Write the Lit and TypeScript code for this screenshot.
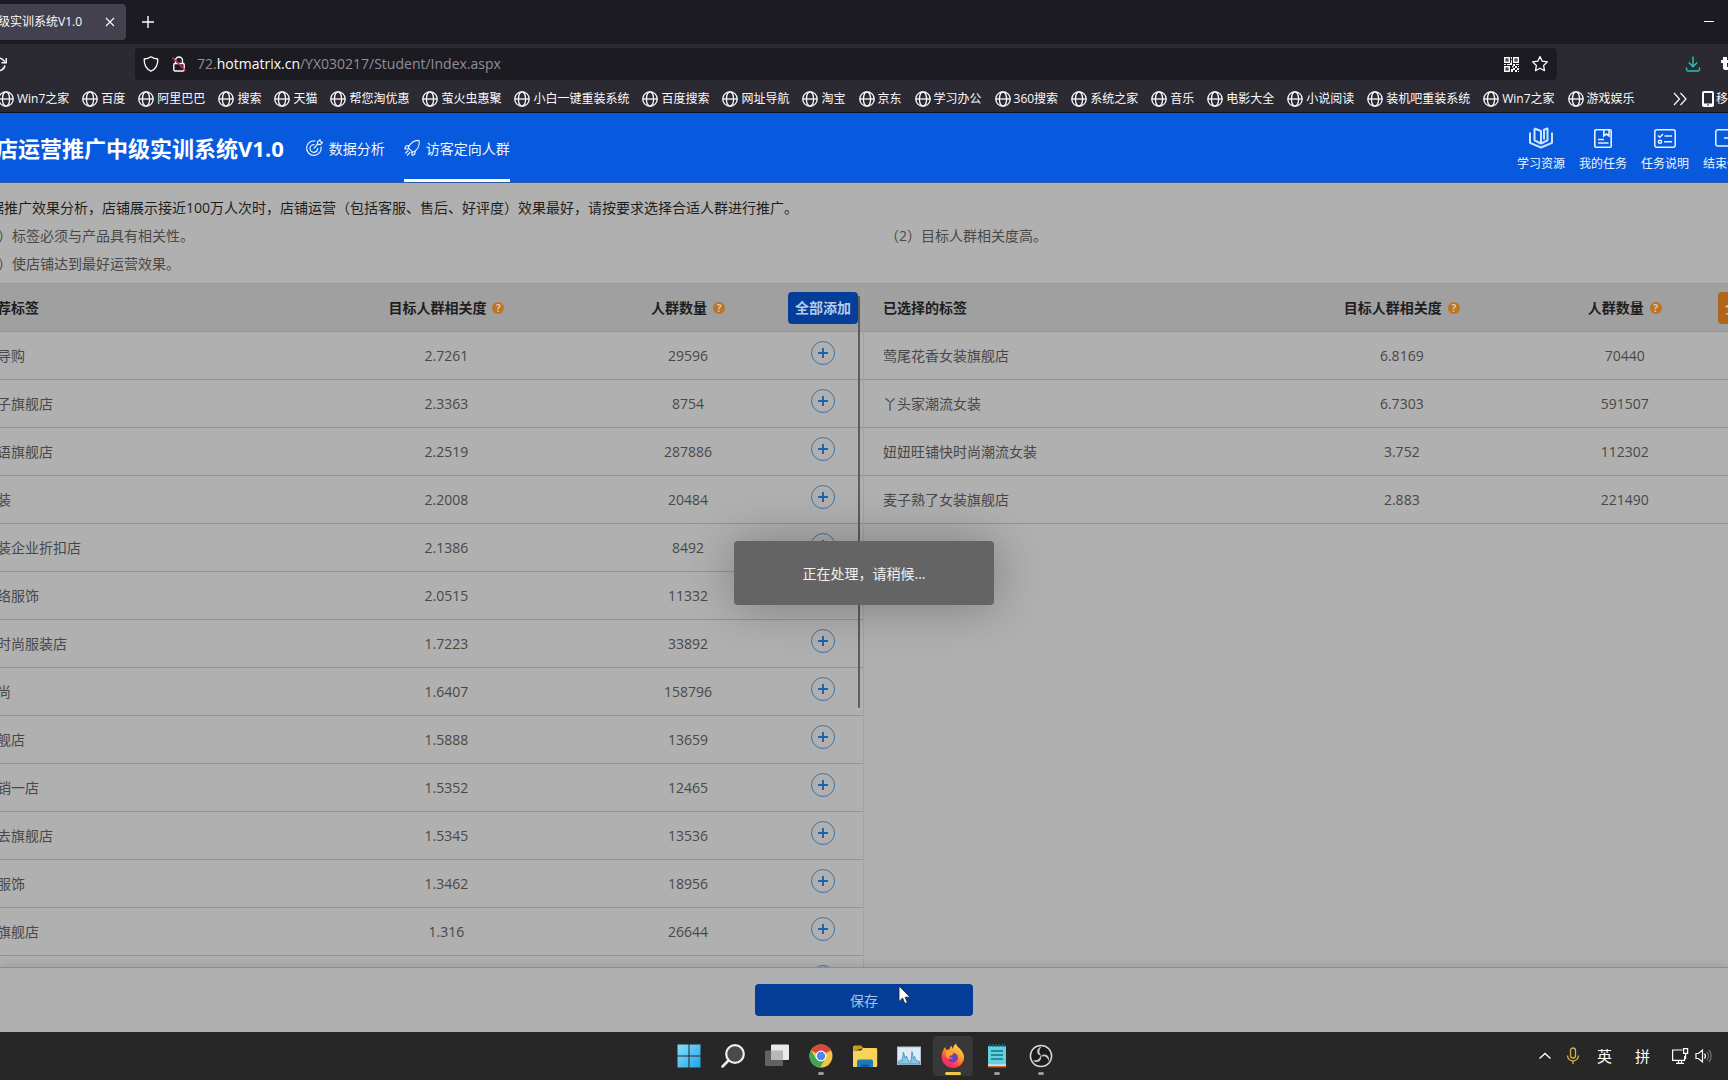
import { LitElement, html, css, svg, nothing } from "lit";
import { customElement, property } from "lit/decorators.js";

type Row = { name: string; score: string; count: string };

const BOOKMARKS = [
  "Win7之家", "百度", "阿里巴巴", "搜索", "天猫", "帮您淘优惠", "萤火虫惠聚",
  "小白一键重装系统", "百度搜索", "网址导航", "淘宝", "京东", "学习办公", "360搜索",
  "系统之家", "音乐", "电影大全", "小说阅读", "装机吧重装系统", "Win7之家", "游戏娱乐",
];

const RECOMMENDED: Row[] = [
  { name: "导购", score: "2.7261", count: "29596" },
  { name: "子旗舰店", score: "2.3363", count: "8754" },
  { name: "语旗舰店", score: "2.2519", count: "287886" },
  { name: "装", score: "2.2008", count: "20484" },
  { name: "装企业折扣店", score: "2.1386", count: "8492" },
  { name: "络服饰", score: "2.0515", count: "11332" },
  { name: "时尚服装店", score: "1.7223", count: "33892" },
  { name: "尚", score: "1.6407", count: "158796" },
  { name: "舰店", score: "1.5888", count: "13659" },
  { name: "销一店", score: "1.5352", count: "12465" },
  { name: "去旗舰店", score: "1.5345", count: "13536" },
  { name: "服饰", score: "1.3462", count: "18956" },
  { name: "旗舰店", score: "1.316", count: "26644" },
  { name: "", score: "", count: "" },
];

const SELECTED: Row[] = [
  { name: "莺尾花香女装旗舰店", score: "6.8169", count: "70440" },
  { name: "丫头家潮流女装", score: "6.7303", count: "591507" },
  { name: "妞妞旺铺快时尚潮流女装", score: "3.752", count: "112302" },
  { name: "麦子熟了女装旗舰店", score: "2.883", count: "221490" },
];

const base = css`
  * { box-sizing: border-box; }
  :host {
    font-family: "Open Sans", "Noto Sans CJK SC", sans-serif;
  }
  svg { display: block; flex: none; }
  button {
    font: inherit; color: inherit; border: 0; background: none; padding: 0; margin: 0;
    display: flex; align-items: center; justify-content: center; flex: none;
  }
  a { color: inherit; text-decoration: none; }
`;

const globe = svg`<g fill="none" stroke="#fbfbfe" stroke-width="1.3"><circle cx="8" cy="8" r="7.2"/><ellipse cx="8" cy="8" rx="3.6" ry="7.2"/><path d="M.8 8h14.4"/></g>`;

@customElement("browser-chrome")
export class BrowserChrome extends LitElement {
  static styles = [base, css`
    :host { display: block; color: #fbfbfe; font-size: 12px; background: #2b2a33; flex: none; }
    .tabs { height: 44px; background: #1c1b22; display: flex; align-items: center; }
    .tab {
      height: 36px; padding: 0 8px 0 0; background: #42414d; border-radius: 0 4px 4px 0;
      display: flex; align-items: center; gap: 20px; margin-right: 14px;
    }
    .tab-title { margin-left: -2px; line-height: 18px; white-space: nowrap; }
    .minimize { margin-left: auto; margin-right: 13px; }
    .nav { height: 40px; display: flex; align-items: center; }
    .reload { margin-left: -9px; margin-right: 128px; width: 16px; }
    .url {
      flex: 1; height: 32px; margin-right: 128px; background: #1c1b22; border-radius: 4px;
      display: flex; align-items: center; gap: 12px; padding: 0 8px;
    }
    .address { flex: 1; margin-left: -2px; font-size: 14px; line-height: 20px; color: #8f8f9a; white-space: nowrap; }
    .address b { color: #fbfbfe; font-weight: 400; }
    .ext { margin-left: 20px; margin-right: -9px; }
    .marks { height: 29px; padding-top: 2px; display: flex; align-items: center; border-bottom: 1px solid #0c1226; overflow: hidden; }
    .mark { display: flex; align-items: center; gap: 3px; margin-right: 13px; line-height: 18px; white-space: nowrap; flex: none; }
    .list { display: flex; margin-left: -2px; flex: 1; min-width: 0; overflow: hidden; }
    .more { margin-right: 14px; }
    .mobile { display: flex; align-items: center; gap: 2px; width: 26px; overflow: hidden; line-height: 18px; }
  `];

  render() {
    return html`
      <div class="tabs">
        <div class="tab">
          <span class="tab-title">级实训系统V1.0</span>
          <button aria-label="关闭标签页"><svg width="16" height="16" viewBox="0 0 16 16"><path d="M4 4l8 8M12 4l-8 8" stroke="#fbfbfe" stroke-width="1.1"/></svg></button>
        </div>
        <button aria-label="新标签页"><svg width="16" height="16" viewBox="0 0 16 16"><path d="M8 2v12M2 8h12" stroke="#fbfbfe" stroke-width="1.4"/></svg></button>
        <button class="minimize" aria-label="最小化"><svg width="12" height="12" viewBox="0 0 12 12"><path d="M1 5.500h10" stroke="#fff"/></svg></button>
      </div>
      <div class="nav">
        <button class="reload" aria-label="刷新"><svg width="16" height="16" viewBox="0 0 16 16"><path d="M14 9.500A6.200 6.200 0 1 1 12.500 4.200L15 6.500M15.300 2v4.800h-4.800" fill="none" stroke="#fbfbfe" stroke-width="1.5"/></svg></button>
        <div class="url">
          <svg width="16" height="16" viewBox="0 0 16 16"><path d="M8 .8C10 2.200 12.500 3 14.800 3c.2 5.500-1.800 10-6.800 12.200C3 13 1 8.500 1.200 3 3.500 3 6 2.200 8 .8z" fill="none" stroke="#fbfbfe" stroke-width="1.300" stroke-linejoin="round"/></svg>
          <svg width="16" height="16" viewBox="0 0 16 16"><path d="M4.500 7.500V4.500a3.500 3.500 0 0 1 7 0v3" fill="none" stroke="#fbfbfe" stroke-width="1.400"/><rect x="2.800" y="7.500" width="10.400" height="7.500" rx="1.200" fill="none" stroke="#fbfbfe" stroke-width="1.400"/><path d="M1.500 1.500l13 13" stroke="#e22850" stroke-width="1.500"/></svg>
          <div class="address" role="textbox" aria-label="地址">72.<b>hotmatrix.cn</b>/YX030217/Student/Index.aspx</div>
          <button aria-label="二维码"><svg width="15" height="15" viewBox="0 0 15 15" fill="#fbfbfe"><path fill-rule="evenodd" d="M0 0h6v6H0zM1.500 1.500v3h3v-3zM9 0h6v6H9zM10.500 1.500v3h3v-3zM0 9h6v6H0zM1.500 10.500v3h3v-3z"/><path d="M2.500 2.500h1v1h-1zM11.500 2.500h1v1h-1zM2.500 11.500h1v1h-1zM7 0h1v2H7zM7 3h1v3H7zM0 7h2v1H0zM3 7h3v1H3zM6 6h2v2H6zM9 7h2v2H9zM12 7h3v1h-3zM8 9h1.500v1.500H8zM11 9h2v2h-2zM13 11h2v2h-2zM9 11h2v2H9zM7 12h2v3H7zM11 13h2v2h-2zM14 14h1v1h-1zM14 9h1v1h-1z"/></svg></button>
          <button aria-label="收藏"><svg width="18" height="18" viewBox="0 0 18 18"><path d="M9 1.500l2.200 4.700 5.200.7-3.800 3.600.9 5.200L9 13.200l-4.500 2.500.9-5.200L1.600 6.900l5.200-.7z" fill="none" stroke="#fbfbfe" stroke-width="1.300" stroke-linejoin="round"/></svg></button>
        </div>
        <button aria-label="下载"><svg width="16" height="16" viewBox="0 0 16 16"><path d="M8 .5v10M3.800 6.500L8 10.700l4.200-4.200M1.500 11.500v1.800c0 1 .7 1.700 1.700 1.700h9.600c1 0 1.700-.7 1.700-1.700v-1.800" fill="none" stroke="#2ac3b2" stroke-width="1.400"/></svg></button>
        <button class="ext" aria-label="扩展"><svg width="16" height="16" viewBox="0 0 16 16"><path d="M2 1h4v3h4v3H6v4h4v3H4q-2 0-2-2V7H0V4h2z" fill="#fbfbfe"/></svg></button>
      </div>
      <nav class="marks">
        <div class="list">${BOOKMARKS.map((t) => html`<a class="mark" href="#"><svg width="16" height="16" viewBox="0 0 16 16">${globe}</svg>${t}</a>`)}</div>
        <button class="more" aria-label="更多书签"><svg width="16" height="16" viewBox="0 0 16 16"><path d="M2 2l5.500 6L2 14M8.500 2L14 8l-5.500 6" fill="none" stroke="#fbfbfe" stroke-width="1.200"/></svg></button>
        <a class="mobile" href="#"><svg width="12" height="16" viewBox="0 0 12 16"><path fill-rule="evenodd" d="M2 0h8a2 2 0 0 1 2 2v12a2 2 0 0 1-2 2H2a2 2 0 0 1-2-2V2a2 2 0 0 1 2-2zM2 2v10.500h8V2zM5 13.500v1h2v-1z" fill="#fbfbfe"/></svg>移</a>
      </nav>`;
  }
}

@customElement("site-header")
export class SiteHeader extends LitElement {
  static styles = [base, css`
    :host { display: block; flex: none; color: #eef5ff; }
    .bar { height: 70px; background: #075ade; border-bottom: 1px solid #2a5ba8; display: flex; align-items: stretch; overflow: hidden; }
    h1 { margin: 0 21px 0 -4px; font-size: 22px; line-height: 70px; font-weight: 700; color: #fff; white-space: nowrap; }
    nav { display: flex; gap: 19px; }
    .link { display: flex; align-items: center; gap: 6px; font-size: 14px; border-bottom: 3px solid transparent; padding-top: 3px; white-space: nowrap; }
    .current { border-color: #fff; }
    .actions { margin-left: auto; display: flex; gap: 14px; margin-right: -23px; }
    .action { flex-direction: column; gap: 5px; font-size: 12px; line-height: 18px; width: 48px; padding-top: 4px; white-space: nowrap; }
    .ending { align-items: flex-start; }
    .ending svg { margin-left: 12px; }
  `];

  render() {
    return html`
      <header class="bar">
        <h1>店运营推广中级实训系统V1.0</h1>
        <nav>
          <a class="link" href="#"><svg width="18" height="18" viewBox="0 0 18 18" fill="none" stroke="#e6f0ff" stroke-width="1.200"><path d="M10.500 2A7.300 7.300 0 1 0 16 7.500"/><path d="M9.500 5.600A3.900 3.900 0 1 0 12.700 9"/><path d="M8.700 9.600l4-4.600M12.500 5.200V2.800L15 .8l.5 2 2 .5-2 2.400z"/></svg>数据分析</a>
          <a class="link current" href="#"><svg width="16" height="18" viewBox="0 0 16 18" fill="none" stroke="#e6f0ff" stroke-width="1.200" stroke-linejoin="round"><path d="M15 1.500c.8 4.500-1 9.500-6.200 11.800L4.200 8.700C6.500 4 10.500 1.200 15 1.500zM5.500 6.300L2 7l-1.200 2.800 3.800.3M11.200 11.800l-.5 3.500-2.400 1.200-.6-3.600"/><path d="M4.500 11.500L1.200 14.300M6.300 13.200L3 16.500"/></svg>访客定向人群</a>
        </nav>
        <div class="actions">
          <button class="action"><svg width="24" height="24" viewBox="0 0 24 24" fill="none" stroke="#cfe4ff" stroke-width="2" stroke-linejoin="round"><path d="M1 6.500v10.300L12 21.500l11-4.700V6.500"/><path d="M5.500 2.500v11.800L12 17.500l6.500-3.200V2.500L15 3.800v9.700M12 17V5L5.500 2.500"/></svg>学习资源</button>
          <button class="action"><svg width="24" height="24" viewBox="0 0 24 24" fill="none" stroke="#e6f0ff" stroke-width="1.600"><rect x="3.800" y="3.800" width="16.400" height="17.400" rx="1"/><path d="M12.800 4v6l2.600-2 2.600 2V4M7 13.500h6M7 17h10.500"/></svg>我的任务</button>
          <button class="action"><svg width="24" height="24" viewBox="0 0 24 24" fill="none" stroke="#e6f0ff" stroke-width="1.500"><rect x="1.800" y="3.800" width="20.400" height="17.400" rx="2"/><path d="M5 9.500l1.800 1.700L10 8M11.500 10H19M11 15.800h8"/><circle cx="7" cy="15.800" r="1.600"/></svg>任务说明</button>
          <button class="action ending"><svg width="24" height="24" viewBox="0 0 24 24" fill="none" stroke="#e6f0ff" stroke-width="1.500"><path d="M20 8V5.800a2 2 0 0 0-2-2H2.800a2 2 0 0 0-2 2V18a2 2 0 0 0 2 2H18M9 12h12"/></svg>结束任</button>
        </div>
      </header>`;
  }
}

@customElement("tag-table")
export class TagTable extends LitElement {
  @property({ attribute: false }) rows: Row[] = [];
  @property() heading = "";
  @property() action = "";
  @property({ type: Boolean, reflect: true }) addable = false;

  static styles = [base, css`
    :host { display: block; color: #484848; font-size: 14px; overflow: hidden; border-top: 1px solid #999; }
    table { width: 100%; table-layout: fixed; border-collapse: separate; border-spacing: 0; }
    :host(:not([addable])) table { width: calc(100% + 65px); }
    th, td { height: 48px; padding: 0; border-bottom: 1px solid #949494; text-align: center; line-height: 20px; white-space: nowrap; font-weight: 400; }
    th { background: #a0a0a0; color: #1e1e1e; font-weight: 700; font-size: 14px; }
    th:first-child, td:first-child { text-align: left; padding-left: 19px; }
    :host([addable]) th:first-child, :host([addable]) td:first-child { padding-left: 0; text-indent: -3px; }
    .score { width: 29%; }
    .count { width: 19%; }
    :host([addable]) .score { width: 34%; }
    :host([addable]) .count { width: 22%; }
    .op { width: 80px; }
    .label { display: inline-flex; align-items: center; gap: 6px; }
    .help { width: 12px; height: 12px; border-radius: 50%; background: #bd7424; color: #dccbb2; font-size: 10px; line-height: 12px; text-align: center; font-weight: 700; }
    .all { width: 70px; height: 32px; border-radius: 4px; background: #b0651a; color: #cfc0ad; margin: 0 auto; justify-content: flex-start; padding-left: 7px; }
    :host([addable]) .all { background: #043e98; color: #b6cbe6; }
    .add { margin: -6px auto 0; width: 24px; height: 24px; }
  `];

  render() {
    return html`
      <table>
        <thead>
          <tr>
            <th scope="col">${this.heading}</th>
            <th scope="col" class="score"><span class="label">目标人群相关度<span class="help">?</span></span></th>
            <th scope="col" class="count"><span class="label">人群数量<span class="help">?</span></span></th>
            <th scope="col" class="op"><button class="all">${this.action}</button></th>
          </tr>
        </thead>
        <tbody>
          ${this.rows.map((r) => html`<tr>
            <td>${r.name}</td><td>${r.score}</td><td>${r.count}</td>
            <td>${this.addable ? html`<button class="add" aria-label="添加"><svg width="24" height="24" viewBox="0 0 24 24" fill="none"><circle cx="12" cy="12" r="11.500" stroke="#44729f"/><path d="M12 7v10M7 12h10" stroke="#1f64a6" stroke-width="2"/></svg></button>` : nothing}</td>
          </tr>`)}
        </tbody>
      </table>`;
  }
}

@customElement("task-bar")
export class TaskBar extends LitElement {
  static styles = [base, css`
    :host { display: block; flex: none; color: #fff; }
    .bar { height: 48px; background: #272727; display: grid; grid-template-columns: 1fr auto 1fr; align-items: center; }
    .apps { grid-column: 2; display: flex; gap: 4px; padding-left: 1px; }
    .app { width: 40px; height: 40px; border-radius: 4px; position: relative; }
    .active { background: #383838; }
    .run::after { content: ""; position: absolute; bottom: 1px; left: 17px; width: 6px; height: 3px; border-radius: 2px; background: #9a9a9a; }
    .active::after { left: 12px; width: 16px; background: #f2c744; }
    .tray { grid-column: 3; justify-self: end; display: flex; align-items: center; padding-right: 16px; font-size: 15px; line-height: 20px; }
    .up { margin-right: 14px; }
    .mic { margin-right: 17px; }
    .ime { margin-right: 23px; }
    .py { margin-right: 21px; }
    .net { margin-right: 6px; }
  `];

  private icon(name: string, art: unknown, cls = "") {
    return html`<button class="app ${cls}" aria-label=${name}><svg width="26" height="26" viewBox="0 0 26 26">${art}</svg></button>`;
  }

  render() {
    const blade = "M13.500 3.500c-4.300 1.300-5.700 5.600-2.800 8.300 1 .9 2.200 1 3 .5-2.700-1.500-3.200-5-.2-8.800z";
    return html`
      <footer class="bar">
        <div class="apps">
          ${this.icon("开始", svg`<defs><linearGradient id="w" x1="0" y1="0" x2="26" y2="26" gradientUnits="userSpaceOnUse"><stop stop-color="#8fe3fa"/><stop offset="1" stop-color="#18a0e8"/></linearGradient></defs><path d="M1.500 1.500h11v11h-11zM13.500 1.500h11v11h-11zM1.500 13.500h11v11h-11zM13.500 13.500h11v11h-11z" fill="url(#w)"/>`)}
          ${this.icon("搜索", svg`<circle cx="15" cy="11" r="8.800" fill="#4a4a4a" stroke="#eee" stroke-width="2.200"/><path d="M8.500 17.500L2.500 23.500" stroke="#eee" stroke-width="2.600" stroke-linecap="round"/>`)}
          ${this.icon("任务视图", svg`<rect x="1" y="7.500" width="18" height="15.500" rx="1" fill="#626262"/><rect x="7" y="1.500" width="18" height="15.500" rx="1" fill="#eaeaea"/><path d="M7 7.500h12V17H7z" fill="#b8b8b8"/>`)}
          ${this.icon("Chrome", svg`<circle cx="13" cy="13" r="11.500" fill="#f6c445"/><path d="M13 13L3 7.300A11.500 11.500 0 0 1 23 7.300z" fill="#dc463c"/><path d="M3 7.300A11.500 11.500 0 0 0 12 24.500l5.500-9L8 15.800z" fill="#3ba757"/><circle cx="13" cy="13" r="5.400" fill="#fff"/><circle cx="13" cy="13" r="4.200" fill="#4a87ee"/>`, "run")}
          ${this.icon("文件资源管理器", svg`<path d="M1 4a1.500 1.500 0 0 1 1.500-1.500h6.500l3 3H10L1 8z" fill="#d49b1b"/><path d="M1 7.500h8l2-2.500h13a1.200 1.200 0 0 1 1.200 1.200V23a1 1 0 0 1-1 1H2a1 1 0 0 1-1-1z" fill="#f8d35a"/><path d="M5 24v-5.500a2 2 0 0 1 2-2h12a2 2 0 0 1 2 2V24z" fill="#1f78b8"/><path d="M9 24v-2.500h8V24z" fill="#155a93"/>`)}
          ${this.icon("性能监视器", svg`<rect x="1.500" y="4" width="23" height="17.500" fill="#dcebf5" stroke="#b5c3cc"/><path d="M2.500 18.500l2-1.500 1.500 1 1.500-9 1.500 6 1.500-2 1 3 2 2.500 1.500 0 1-10 1.500 7 1-2 1.500 4 3.500 1V21h-21z" fill="#8cc4e2" stroke="#2f86b8" stroke-width=".7"/>`)}
          ${this.icon("Firefox", svg`<defs><linearGradient id="f" x1="20" y1="2" x2="6" y2="24" gradientUnits="userSpaceOnUse"><stop stop-color="#ffe04a"/><stop offset=".45" stop-color="#ff9128"/><stop offset=".75" stop-color="#fb3b4d"/><stop offset="1" stop-color="#e5248f"/></linearGradient></defs><path d="M3.500 6.500L5 4l1.500 3 3-1 1.500-3.500 2 3.500c0-2 1-4 3-5.500.5 3 3 4 5 6.500s3.500 5 3 8.500c-.8 5.500-5.500 9.500-11 9.500S2 20.500 1.700 15c-.2-3.500.5-6 1.800-8.500z" fill="url(#f)"/><path d="M8.500 12c2.500-3 7.500-2.500 9 .8 1.300 3.200-.8 6.700-4.500 6.700-2.800 0-4.500-1.500-5-3.500 2 .8 3.700.2 5-1.500-2 .2-3-.5-4.500-2.500z" fill="#6b3fc4"/><path d="M6 9c2-.8 4-.5 5.500.6l2 1.200-2 2C9 12 8 14 9.500 15.500 7 15.500 5 12.500 6 9z" fill="#ffa436"/>`, "run active")}
          ${this.icon("记事本", svg`<path d="M4 3h18v19H4z" fill="#62d0df"/><path d="M4 21.500h18V24H4z" fill="#f2f2f2"/><path d="M4 22.800h18v1.600H4z" fill="#cf6a2a"/><path d="M6 1v3M9 1v3M12 1v3M15 1v3M18 1v3M20.500 1v3" stroke="#1c6f85" stroke-width="1.500"/><path d="M7 8h12M7 12h12M7 16h12" stroke="#14748c" stroke-width="1.600"/>`, "run")}
          ${this.icon("OBS", svg`<circle cx="13" cy="13" r="10.600" fill="#1c1c1c" stroke="#d8d8d8" stroke-width="1.500"/><g fill="#c4c4c4"><path d=${blade}/><path d=${blade} transform="rotate(120 13 13)"/><path d=${blade} transform="rotate(240 13 13)"/></g>`, "run")}
        </div>
        <div class="tray">
          <button class="up" aria-label="显示隐藏的图标"><svg width="14" height="14" viewBox="0 0 14 14"><path d="M1.500 9.500L7 4.500l5.500 5" fill="none" stroke="#fff" stroke-width="1.300"/></svg></button>
          <svg class="mic" width="14" height="18" viewBox="0 0 14 18" fill="none" stroke="#cdb544" stroke-width="1.300"><rect x="4.500" y="1" width="5" height="10" rx="2.500"/><path d="M1.500 8.500a5.500 5.500 0 0 0 11 0M7 14v3"/></svg>
          <span class="ime">英</span>
          <span class="py">拼</span>
          <svg class="net" width="18" height="18" viewBox="0 0 18 18" fill="none" stroke="#fff" stroke-width="1.200"><path d="M11.500 3H1.600v10.400h12V9M5 16.400h8M7.500 13.500v3M10.500 13.500v3"/><path d="M12.600 1.600h4v4.800h-4zM14.600 6.500V12"/></svg>
          <svg width="17" height="16" viewBox="0 0 17 16" fill="none" stroke="#fff" stroke-width="1.200"><path d="M1 5.500h2.500L7.500 2v12l-4-3.500H1zM9.500 5.500a4 4 0 0 1 0 5"/><path d="M11.800 3.800a6.500 6.500 0 0 1 0 8.400M14 2a9.300 9.300 0 0 1 0 12" stroke="#777"/></svg>
        </div>
      </footer>`;
  }
}

@customElement("app-root")
export class AppRoot extends LitElement {
  static styles = [base, css`
    :host { display: flex; flex-direction: column; height: 100vh; overflow: hidden; position: relative; background: #b0b0b0; font-size: 14px; }
    .notice { flex: none; padding: 11px 0 5px; line-height: 28px; color: #484848; white-space: nowrap; overflow: hidden; }
    .lead { margin: 0 0 0 -10px; color: #1e1e1e; }
    .rules { display: grid; grid-template-columns: 1fr 1fr; margin: 0; padding: 0; list-style: none; }
    .rules li { margin-left: -2px; }
    .rules li:nth-child(even) { margin-left: 21px; }
    .panels { flex: 1; min-height: 0; display: grid; grid-template-columns: 1fr 1fr; overflow: hidden; position: relative; }
    .left { border-right: 1px solid #a3a3a3; min-width: 0; position: relative; }
    .scroll { position: absolute; right: 3px; top: 13px; width: 2px; height: 412px; background: #5c5c5c; border-radius: 1px; }
    .save { flex: none; height: 65px; display: flex; justify-content: center; align-items: center; border-top: 1px solid #8c8c8c; box-shadow: 0 -2px 8px rgba(0, 0, 0, 0.1); position: relative; background: #b0b0b0; }
    .save-btn { width: 218px; height: 32px; border-radius: 4px; background: #043e98; color: #a9c2e2; }
    .toast { position: absolute; left: 50%; top: 541px; width: 260px; height: 64px; transform: translateX(-50%); display: flex; align-items: center; justify-content: center; background: #646464; color: #f2f2f2; border-radius: 4px; box-shadow: 1px 1px 50px rgba(0, 0, 0, 0.3); }
    .cursor { position: absolute; left: 50%; top: 985px; margin-left: 34px; }
  `];

  render() {
    return html`
      <browser-chrome></browser-chrome>
      <site-header></site-header>
      <section class="notice">
        <p class="lead">据推广效果分析，店铺展示接近100万人次时，店铺运营（包括客服、售后、好评度）效果最好，请按要求选择合适人群进行推广。</p>
        <ul class="rules">
          <li>）标签必须与产品具有相关性。</li>
          <li>（2）目标人群相关度高。</li>
          <li>）使店铺达到最好运营效果。</li>
        </ul>
      </section>
      <main class="panels">
        <div class="left">
          <tag-table addable heading="荐标签" action="全部添加" .rows=${RECOMMENDED}></tag-table>
          <div class="scroll"></div>
        </div>
        <tag-table heading="已选择的标签" action="全" .rows=${SELECTED}></tag-table>
      </main>
      <div class="save"><button class="save-btn">保存</button></div>
      <task-bar></task-bar>
      <div class="toast" role="status">正在处理，请稍候...</div>
      <svg class="cursor" width="13" height="20" viewBox="0 0 13 20"><path d="M1 1v15.500l3.600-3.400 2.300 5.400 2.500-1.100-2.300-5.200h5z" fill="#fff" stroke="#222" stroke-width=".8"/></svg>`;
  }
}
